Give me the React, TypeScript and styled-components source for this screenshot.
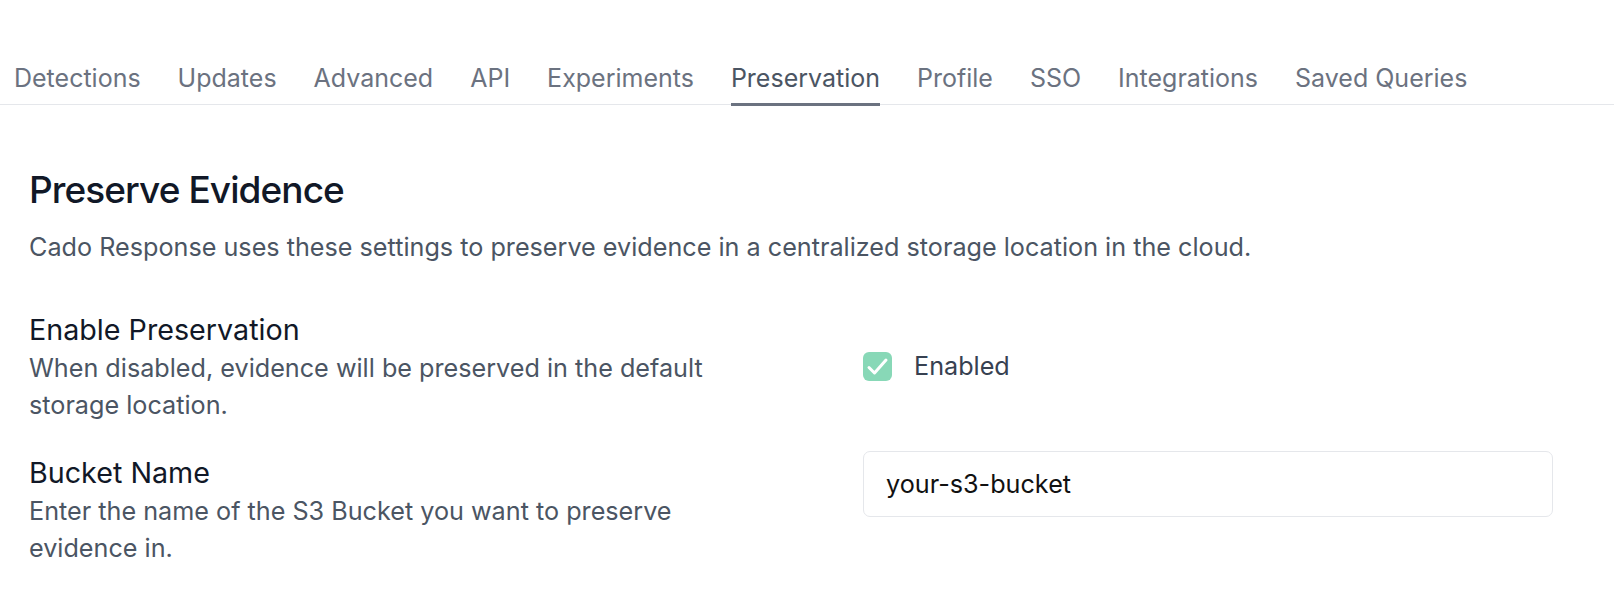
import React from "react";
import styled, { createGlobalStyle } from "styled-components";

const Global = createGlobalStyle`
  html, body { margin: 0; padding: 0; background: #ffffff; }
  body { font-family: Inter, "Noto Sans", sans-serif; -webkit-font-smoothing: antialiased; }
  * { box-sizing: border-box; }
`;

const Page = styled.div`
  width: 1614px;
  min-height: 600px;
  background: #ffffff;
`;

const TabBar = styled.nav`
  display: flex;
  gap: 37px;
  padding: 59px 0 0 14px;
  border-bottom: 1px solid #e5e7eb;
`;

const Tab = styled.div<{ $active?: boolean }>`
  font-size: 25px;
  line-height: 39px;
  color: ${(p) => (p.$active ? "#4b5563" : "#6b7280")};
  padding-bottom: 5px;
  margin-bottom: -2px;
  border-bottom: 3px solid ${(p) => (p.$active ? "#6b7280" : "transparent")};
  white-space: nowrap;
`;

const Content = styled.section`
  padding: 61px 61px 0 29px;
`;

const Heading = styled.h1`
  margin: 0;
  font-size: 37px;
  line-height: 48px;
  font-weight: 500;
  letter-spacing: -0.025em;
  color: #111827;
`;

const Lead = styled.p`
  margin: 15px 0 0;
  font-size: 25.2px;
  line-height: 37.5px;
  color: #4b5563;
`;

const Fields = styled.div`
  display: flex;
  flex-direction: column;
  gap: 28px;
  margin-top: 43px;
`;

const FieldRow = styled.div<{ $align?: string }>`
  display: grid;
  grid-template-columns: 1fr 1fr;
  column-gap: 144px;
  align-items: ${(p) => p.$align || "start"};
`;

const FieldText = styled.div`
  display: flex;
  flex-direction: column;
`;

const Label = styled.div`
  font-size: 28.7px;
  line-height: 40px;
  color: #111827;
`;

const Help = styled.div`
  font-size: 25.2px;
  line-height: 37.5px;
  color: #4b5563;
`;

const CheckWrap = styled.label`
  display: flex;
  align-items: center;
  gap: 22px;
  font-size: 25.2px;
  line-height: 37px;
  color: #374151;
  margin-top: -2px;
`;

const CheckBox = styled.span`
  width: 29px;
  height: 29px;
  border-radius: 6px;
  background: #88d8b7;
  display: flex;
  align-items: center;
  justify-content: center;
  flex: none;
`;

const TextInput = styled.input`
  width: 100%;
  height: 66px;
  margin-top: -2px;
  border: 1px solid #e5e7eb;
  border-radius: 7px;
  padding: 0 22px;
  font-family: Inter, "Noto Sans", sans-serif;
  font-size: 25.2px;
  color: #111111;
  background: #ffffff;
  outline: none;
`;

const tabs = [
  "Detections",
  "Updates",
  "Advanced",
  "API",
  "Experiments",
  "Preservation",
  "Profile",
  "SSO",
  "Integrations",
  "Saved Queries",
];

export default function App() {
  return (
    <Page>
      <Global />
      <TabBar>
        {tabs.map((t) => (
          <Tab key={t} $active={t === "Preservation"}>
            {t}
          </Tab>
        ))}
      </TabBar>
      <Content>
        <Heading>Preserve Evidence</Heading>
        <Lead>
          Cado Response uses these settings to preserve evidence in a centralized storage location in the cloud.
        </Lead>
        <Fields>
          <FieldRow $align="center">
            <FieldText>
              <Label>Enable Preservation</Label>
              <Help>When disabled, evidence will be preserved in the default storage location.</Help>
            </FieldText>
            <CheckWrap>
              <CheckBox>
                <svg width="29" height="29" viewBox="0 0 29 29" fill="none">
                  <path d="M6 15.5 L11.5 21 L23 8" stroke="#ffffff" strokeWidth="3" strokeLinecap="round" strokeLinejoin="round" />
                </svg>
              </CheckBox>
              Enabled
            </CheckWrap>
          </FieldRow>
          <FieldRow>
            <FieldText>
              <Label>Bucket Name</Label>
              <Help>Enter the name of the S3 Bucket you want to preserve evidence in.</Help>
            </FieldText>
            <TextInput defaultValue="your-s3-bucket" />
          </FieldRow>
        </Fields>
      </Content>
    </Page>
  );
}
